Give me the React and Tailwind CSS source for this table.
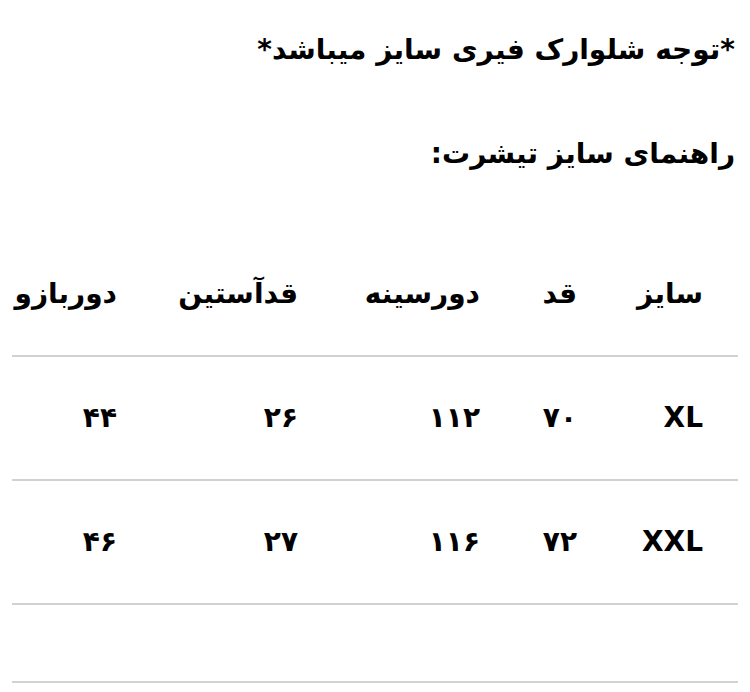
import React from 'react'

const headers = ['سایز', 'قد', 'دورسینه', 'قدآستین', 'دوربازو']

const rows = [
    ['XL', '۷۰', '۱۱۲', '۲۶', '۴۴'],
    ['XXL', '۷۲', '۱۱۶', '۲۷', '۴۶'],
]

function App() {
    return (
        <div dir="rtl" className="w-[750px] h-[692px] overflow-hidden bg-white text-black font-['DejaVu_Sans',sans-serif]">
            <div className="px-[15px] pt-[24px]">
                <p className="text-[28px] font-bold leading-[52px]">*توجه شلوارک فیری سایز میباشد*</p>
                <p className="mt-[52px] text-[28px] font-bold leading-[52px]">راهنمای سایز تیشرت:</p>
            </div>

            <table className="mt-[52px] mx-[12px] w-[726px] table-fixed border-collapse">
                <colgroup>
                    <col className="w-[126px]" />
                    <col className="w-[97px]" />
                    <col className="w-[182px]" />
                    <col className="w-[181px]" />
                    <col className="w-[140px]" />
                </colgroup>
                <thead>
                    <tr className="h-[124px] border-b-2 border-[#d2d2d2]">
                        {headers.map((h) => (
                            <th key={h} className="pr-[35px] text-right text-[28px] font-bold whitespace-nowrap">{h}</th>
                        ))}
                    </tr>
                </thead>
                <tbody>
                    {rows.map((row) => (
                        <tr key={row[0]} className="h-[124px] border-b-2 border-[#d2d2d2]">
                            {row.map((cell, i) => (
                                <td key={i} className="pr-[35px] text-right text-[28px] font-bold whitespace-nowrap">{cell}</td>
                            ))}
                        </tr>
                    ))}
                    <tr className="h-[78px] border-b-2 border-[#d2d2d2]">
                        <td colSpan={5}></td>
                    </tr>
                </tbody>
            </table>
        </div>
    )
}

export default App
